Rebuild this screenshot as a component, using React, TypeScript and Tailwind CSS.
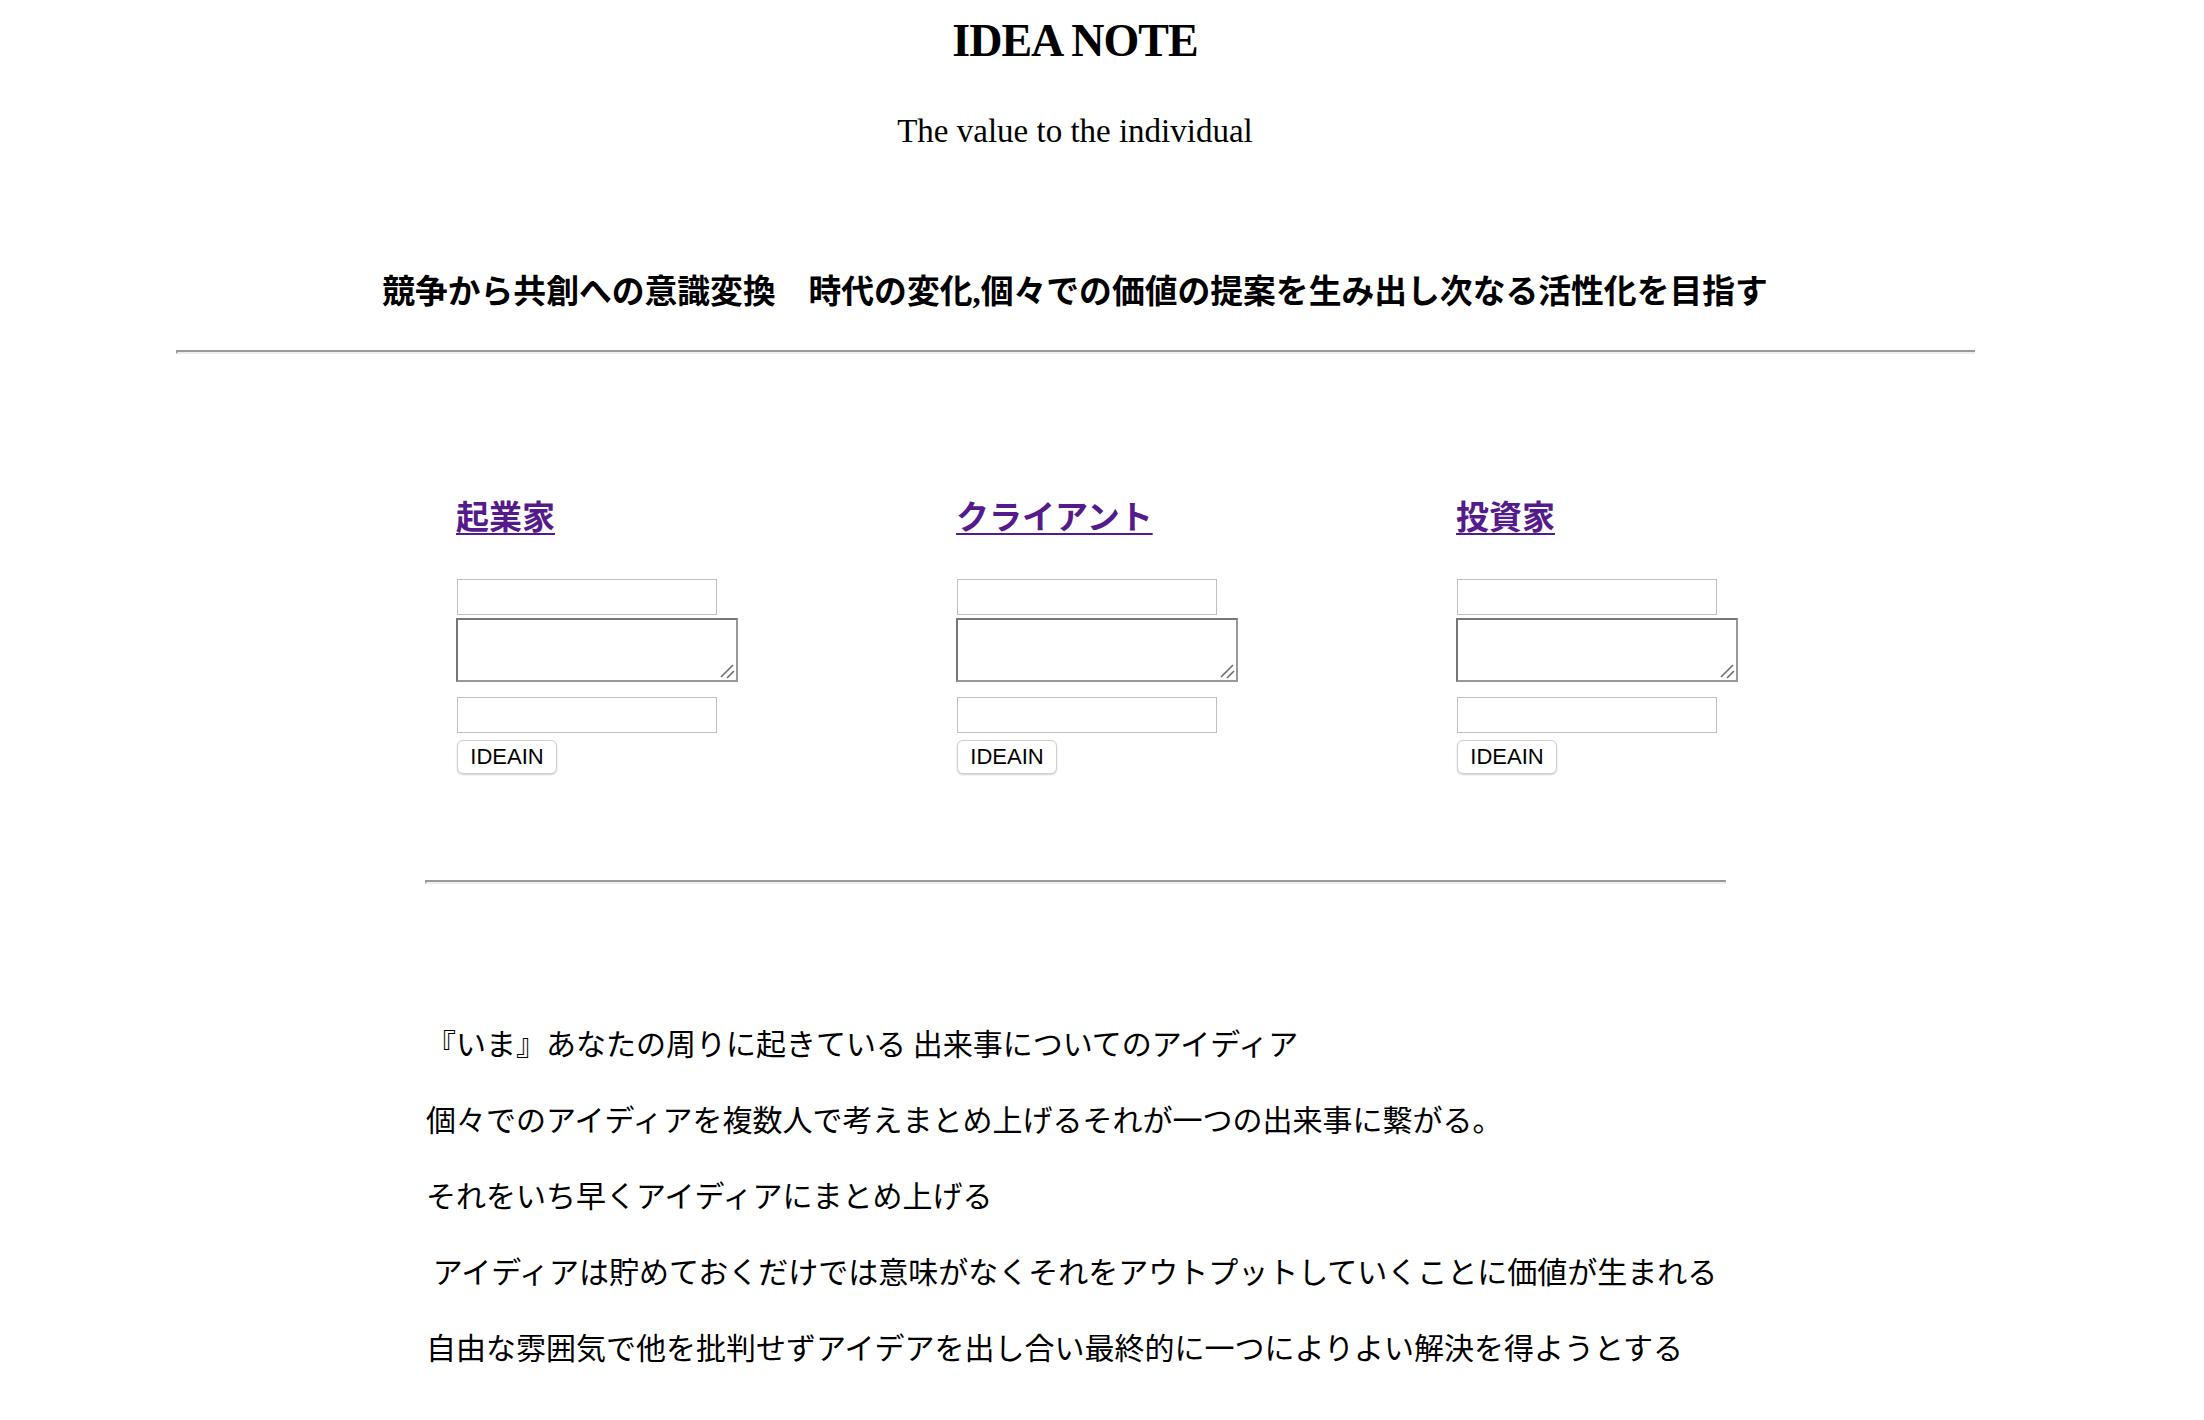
const roles = ['起業家', 'クライアント', '投資家'];

const notes = [
	'『いま』あなたの周りに起きている 出来事についてのアイディア',
	'個々でのアイディアを複数人で考えまとめ上げるそれが一つの出来事に繋がる。',
	'それをいち早くアイディアにまとめ上げる',
	'\u00a0アイディアは貯めておくだけでは意味がなくそれをアウトプットしていくことに価値が生まれる',
	'自由な雰囲気で他を批判せずアイデアを出し合い最終的に一つによりよい解決を得ようとする',
];

function RoleForm({ name }: { name: string }) {
	return (
		<div className="w-[500px] flex flex-col items-start">
			<a
				href="#"
				className="text-[33px] leading-[40px] font-bold text-[#551a8b] underline underline-offset-[4px] decoration-[2px] font-['Noto_Sans_CJK_JP',sans-serif]"
			>
				{name}
			</a>
			<input
				type="text"
				className="mt-[44px] ml-[1px] w-[260px] h-[36px] border border-[#c0c0c0] bg-white outline-none"
			/>
			<div className="relative mt-[3px] w-[282px] h-[64px]">
				<textarea className="block w-full h-full resize-none border-2 border-t-[#767676] border-l-[#767676] border-b-[#999999] border-r-[#999999] bg-white outline-none" />
				{/* resize grip */}
				<svg
					className="absolute right-0 bottom-0 pointer-events-none"
					width="20"
					height="20"
					viewBox="0 0 20 20"
				>
					<path d="M3 15 L15 3 M9 16 L16 9" stroke="#6e6e6e" strokeWidth="1.6" fill="none" />
				</svg>
			</div>
			<input
				type="text"
				className="mt-[15px] ml-[1px] w-[260px] h-[36px] border border-[#c0c0c0] bg-white outline-none"
			/>
			<button className="mt-[7px] ml-[1px] w-[100px] h-[34px] rounded-[6px] border border-[#cfcfcf] bg-white shadow-[0_1px_2px_rgba(0,0,0,0.18)] text-[22px] leading-none text-black font-['Liberation_Sans',Arial,sans-serif]">
				IDEAIN
			</button>
		</div>
	);
}

export default function App() {
	return (
		<div className="w-[2150px] bg-white text-black pb-[40px]">
			<h1 className="pt-[14px] text-center text-[46px] leading-[54px] font-bold tracking-[-1px] font-['Liberation_Serif','Times_New_Roman',serif]">
				IDEA NOTE
			</h1>
			<p className="mt-[43px] text-center text-[33px] leading-[40px] font-['Liberation_Serif','Times_New_Roman',serif]">
				The value to the individual
			</p>
			<h2 className="mt-[121px] text-center text-[32.8px] leading-[40px] font-bold font-['Liberation_Serif','Noto_Sans_CJK_JP',serif]">
				競争から共創への意識変換　時代の変化,個々での価値の提案を生み出し次なる活性化を目指す
			</h2>
			<hr className="mt-[38px] ml-[176px] w-[1799px] h-0 border-0 border-t-2 border-b-2 border-l-2 border-t-[#9a9a9a] border-l-[#9a9a9a] border-b-[#eeeeee]" />
			<div className="mt-[141px] flex pl-[456px]">
				{roles.map((role) => (
					<RoleForm key={role} name={role} />
				))}
			</div>
			<hr className="mt-[106px] ml-[425px] w-[1301px] h-0 border-0 border-t-2 border-b-2 border-l-2 border-t-[#9a9a9a] border-l-[#9a9a9a] border-b-[#eeeeee]" />
			<div className="mt-[136px] ml-[426px] w-[1400px] font-['Noto_Sans_CJK_JP',sans-serif] text-[30px] leading-[44px]">
				{notes.map((line, index) => (
					<p key={index} className="mb-[32px] whitespace-pre">
						{line}
					</p>
				))}
			</div>
		</div>
	);
}
